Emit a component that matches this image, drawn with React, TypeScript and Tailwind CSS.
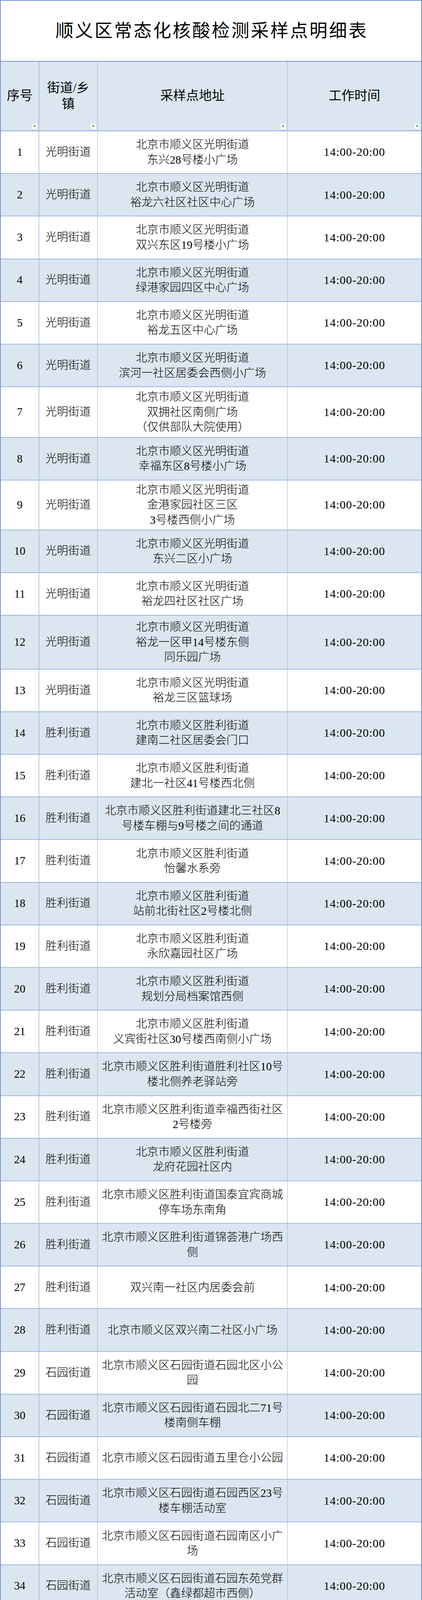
import React from "react";

type Row = {
  n: number;
  street: string;
  lines: string[];
  time?: string[];
  h?: string;
};

const rows: Row[] = [
  { n: 1, street: "光明街道", lines: ["北京市顺义区光明街道", "东兴28号楼小广场"] },
  { n: 2, street: "光明街道", lines: ["北京市顺义区光明街道", "裕龙六社区社区中心广场"] },
  { n: 3, street: "光明街道", lines: ["北京市顺义区光明街道", "双兴东区19号楼小广场"] },
  { n: 4, street: "光明街道", lines: ["北京市顺义区光明街道", "绿港家园四区中心广场"] },
  { n: 5, street: "光明街道", lines: ["北京市顺义区光明街道", "裕龙五区中心广场"] },
  { n: 6, street: "光明街道", lines: ["北京市顺义区光明街道", "滨河一社区居委会西侧小广场"] },
  { n: 7, street: "光明街道", lines: ["北京市顺义区光明街道", "双拥社区南侧广场", "（仅供部队大院使用）"], h: "h-[129.6px]" },
  { n: 8, street: "光明街道", lines: ["北京市顺义区光明街道", "幸福东区8号楼小广场"] },
  { n: 9, street: "光明街道", lines: ["北京市顺义区光明街道", "金港家园社区三区", "3号楼西侧小广场"], h: "h-[127.6px]" },
  { n: 10, street: "光明街道", lines: ["北京市顺义区光明街道", "东兴二区小广场"] },
  { n: 11, street: "光明街道", lines: ["北京市顺义区光明街道", "裕龙四社区社区广场"] },
  { n: 12, street: "光明街道", lines: ["北京市顺义区光明街道", "裕龙一区甲14号楼东侧", "同乐园广场"], h: "h-[137.8px]" },
  { n: 13, street: "光明街道", lines: ["北京市顺义区光明街道", "裕龙三区篮球场"] },
  { n: 14, street: "胜利街道", lines: ["北京市顺义区胜利街道", "建南二社区居委会门口"] },
  { n: 15, street: "胜利街道", lines: ["北京市顺义区胜利街道", "建北一社区41号楼西北侧"] },
  { n: 16, street: "胜利街道", lines: ["北京市顺义区胜利街道建北三社区8", "号楼车棚与9号楼之间的通道"] },
  { n: 17, street: "胜利街道", lines: ["北京市顺义区胜利街道", "怡馨水系旁"] },
  { n: 18, street: "胜利街道", lines: ["北京市顺义区胜利街道", "站前北街社区2号楼北侧"] },
  { n: 19, street: "胜利街道", lines: ["北京市顺义区胜利街道", "永欣嘉园社区广场"] },
  { n: 20, street: "胜利街道", lines: ["北京市顺义区胜利街道", "规划分局档案馆西侧"] },
  { n: 21, street: "胜利街道", lines: ["北京市顺义区胜利街道", "义宾街社区30号楼西南侧小广场"] },
  { n: 22, street: "胜利街道", lines: ["北京市顺义区胜利街道胜利社区10号", "楼北侧养老驿站旁"] },
  { n: 23, street: "胜利街道", lines: ["北京市顺义区胜利街道幸福西街社区", "2号楼旁"] },
  { n: 24, street: "胜利街道", lines: ["北京市顺义区胜利街道", "龙府花园社区内"] },
  { n: 25, street: "胜利街道", lines: ["北京市顺义区胜利街道国泰宜宾商城", "停车场东南角"] },
  { n: 26, street: "胜利街道", lines: ["北京市顺义区胜利街道锦荟港广场西", "侧"] },
  { n: 27, street: "胜利街道", lines: ["双兴南一社区内居委会前"] },
  { n: 28, street: "胜利街道", lines: ["北京市顺义区双兴南二社区小广场"] },
  { n: 29, street: "石园街道", lines: ["北京市顺义区石园街道石园北区小公", "园"] },
  { n: 30, street: "石园街道", lines: ["北京市顺义区石园街道石园北二71号", "楼南侧车棚"] },
  { n: 31, street: "石园街道", lines: ["北京市顺义区石园街道五里仓小公园"] },
  { n: 32, street: "石园街道", lines: ["北京市顺义区石园街道石园西区23号", "楼车棚活动室"] },
  { n: 33, street: "石园街道", lines: ["北京市顺义区石园街道石园南区小广", "场"] },
  { n: 34, street: "石园街道", lines: ["北京市顺义区石园街道石园东苑党群", "活动室（鑫绿都超市西侧）"] },
  { n: 35, street: "石园街道", lines: ["北京市顺义区石园街道仁平公园东侧", "入口"] },
  { n: 36, street: "石园街道", lines: ["北京市顺义区石园街道仁和花园三区", "社区下沉广场"] },
  { n: 37, street: "石园街道", lines: ["北京市顺义区石园街道仁一社区北小", "门活动室"] },
  { n: 38, street: "石园街道", lines: ["北京市顺义区石园街道仁二社区小广", "场"] },
  { n: 39, street: "石园街道", lines: ["北京市顺义区石园街道港馨西区广场"] },
  { n: 40, street: "石园街道", lines: ["北京市顺义区石园街道城南体育中心", "（西）"], time: ["9:00-17:00"] },
  { n: 41, street: "石园街道", lines: ["北京市顺义区石园街道城南体育中心", "（东）"], time: ["9:00-17:00"] },
  { n: 42, street: "石园街道", lines: ["北京市顺义区顺康路1号（医院院", "内）"], time: ["8:00-16:00"] },
  { n: 43, street: "旺泉街道", lines: ["北京市顺义区旺泉街道望泉西里二区", "北门西侧宜客生鲜隔壁"], time: ["9:00-11:30", "13:00-18:00"] },
  { n: 44, street: "旺泉街道", lines: ["北京市顺义区旺泉街道顺义区府前西", "街15号（医院院内）"] },
  { n: 45, street: "旺泉街道", lines: ["北京市顺义区旺泉街道西辛南区2号", "楼北侧", "（原建委招标办北院）"], h: "h-[138px]" },
  { n: 46, street: "旺泉街道", lines: ["北京市顺义区旺泉街道西辛南区2号", "楼北侧", "（原建委招标办南院）"], h: "h-[127px]" },
  { n: 47, street: "旺泉街道", lines: ["北京市顺义区旺泉街道前进花园社区", "南侧院内"] },
  { n: 48, street: "旺泉街道", lines: ["北京市顺义区旺泉街道玉兰苑社区西", "侧前景路西院内东侧"] },
  { n: 49, street: "旺泉街道", lines: ["北京市顺义区旺泉街道玉兰苑社区西", "侧前景路西院内西侧"] },
  { n: 50, street: "旺泉街道", lines: ["北京市顺义区旺泉街道望泉家园南侧", "望泉北街路南院内东侧"] },
  { n: 51, street: "旺泉街道", lines: ["北京市顺义区旺泉街道望泉家园南侧", "望泉北街路南院内西侧"] },
  { n: 52, street: "旺泉街道", lines: ["北京市顺义区旺泉街道望泉西里一区", "8号楼东侧主路旁"] },
  { n: 53, street: "旺泉街道", lines: ["北京市顺义区旺泉街道望泉西里二区", "13号楼南侧停车场"] },
  { n: 54, street: "旺泉街道", lines: ["北京市顺义区旺泉街道梅香街7号院", "商业楼停车场北侧"] },
  { n: 55, street: "旺泉街道", lines: ["北京市顺义区旺泉街道梅香街7号院", "商业楼停车场南侧"] },
  { n: 56, street: "旺泉街道", lines: ["北京市顺义区旺泉街道澜西园二区南", "侧军营街路南院内北侧"] },
  { n: 57, street: "旺泉街道", lines: ["北京市顺义区旺泉街道澜西园二区南", "侧军营街路南院内南侧"] },
  { n: 58, street: "双丰街道", lines: ["北京市顺义区双丰街道马坡二区中心", "广场"] },
  { n: 59, street: "双丰街道", lines: ["北京市顺义区双丰街道北辰花园社区", "3号楼西侧"] },
  { n: 60, street: "双丰街道", lines: ["北京市顺义区双丰街道香悦东三区1", "号楼西侧（居委会门前）"] },
  { n: 61, street: "双丰街道", lines: ["北京市顺义区双丰街道鲁能溪园社区", "居委会门口"] },
  { n: 62, street: "双丰街道", lines: ["北京市顺义区双丰街道顺兴社区社区", "2号楼南侧广场"] },
];

function FilterButton() {
  return (
    <div className="absolute right-[2px] bottom-[2px] w-[17px] h-[17px] bg-white border border-[#c8c8c8] flex items-center justify-center">
      <svg width="9" height="7" viewBox="0 0 9 7">
        <polygon points="1,1 8,1 4.5,6" fill="#1fa35a" />
      </svg>
    </div>
  );
}

export default function App() {
  return (
    <div className="w-[1080px] h-[7222px] overflow-hidden bg-white text-black font-['Liberation_Serif','Noto_Sans_CJK_SC',serif]">
      <div className="w-[1080px] border-x-2 border-[#6f97d3]">
        {/* Title */}
        <div className="h-[158px] border-t-2 border-b-2 border-[#6f97d3] flex items-center justify-center">
          <h1 className="text-[46px] leading-none tracking-[4px] pl-[4px] font-normal">顺义区常态化核酸检测采样点明细表</h1>
        </div>

        {/* Header */}
        <div className="grid grid-cols-[98px_150px_486px_342px] h-[178px] bg-[#dce6f1] border-b-2 border-[#8eaadb] text-[33px]">
          <div className="relative flex items-center justify-center border-r border-[#6f97d3]">
            <span>序号</span>
            <FilterButton />
          </div>
          <div className="relative flex flex-col items-center justify-center border-r border-[#9fb3d3] leading-[41px]">
            <span>街道/乡</span>
            <span>镇</span>
            <FilterButton />
          </div>
          <div className="relative flex items-center justify-center border-r border-[#9fb3d3]">
            <span>采样点地址</span>
            <FilterButton />
          </div>
          <div className="relative flex items-center justify-center">
            <span>工作时间</span>
            <FilterButton />
          </div>
        </div>

        {/* Rows */}
        {rows.map((r) => (
          <div
            key={r.n}
            className={
              "grid grid-cols-[98px_150px_486px_342px] border-b-2 border-[#9bb7e0] font-light " +
              (r.h ?? "h-[109.2px]") +
              (r.n % 2 === 0 ? " bg-[#dce6f1]" : " bg-white")
            }
          >
            <div className="flex items-center justify-center border-r border-[#6f97d3] text-[29px]">
              {r.n}
            </div>
            <div className="flex items-center justify-center border-r border-[#9fb3d3] text-[29px] whitespace-nowrap">
              {r.street}
            </div>
            <div className="flex flex-col items-center justify-center border-r border-[#9fb3d3] text-[29px] leading-[38.5px] whitespace-nowrap">
              {r.lines.map((l, i) => (
                <span key={i}>{l}</span>
              ))}
            </div>
            <div className="flex flex-col items-center justify-center text-[30px] leading-[38.5px] tracking-[1px]">
              {(r.time ?? ["14:00-20:00"]).map((t, i) => (
                <span key={i}>{t}</span>
              ))}
            </div>
          </div>
        ))}
      </div>
    </div>
  );
}
